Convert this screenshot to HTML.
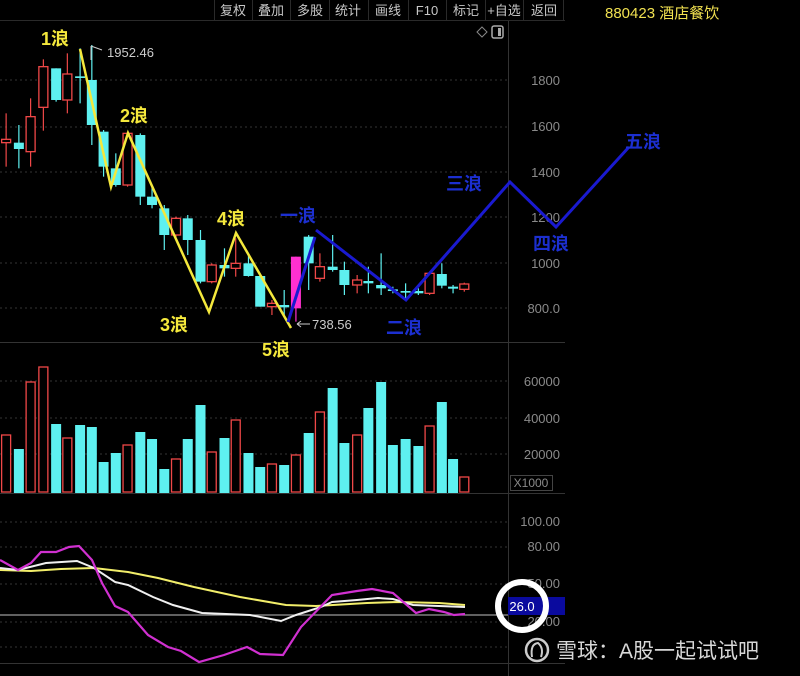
<!DOCTYPE html>
<html><head><meta charset="utf-8">
<style>
html,body{margin:0;padding:0;background:#000;width:800px;height:676px;overflow:hidden}
svg{display:block}
text{font-family:"Liberation Sans","Noto Sans CJK SC",sans-serif}
</style></head>
<body>
<svg id="s" width="800" height="676" viewBox="0 0 800 676" xmlns="http://www.w3.org/2000/svg">
<rect width="800" height="676" fill="#000"/>
<!-- toolbar -->
<g stroke="#2a2a2a" stroke-width="1">
<line x1="0" y1="20.5" x2="565" y2="20.5"/>
<line x1="214.5" y1="0" x2="214.5" y2="20"/><line x1="252.5" y1="0" x2="252.5" y2="20"/>
<line x1="290.5" y1="0" x2="290.5" y2="20"/><line x1="329.5" y1="0" x2="329.5" y2="20"/>
<line x1="368.5" y1="0" x2="368.5" y2="20"/><line x1="408.5" y1="0" x2="408.5" y2="20"/>
<line x1="446.5" y1="0" x2="446.5" y2="20"/><line x1="485.5" y1="0" x2="485.5" y2="20"/>
<line x1="523.5" y1="0" x2="523.5" y2="20"/><line x1="563.5" y1="0" x2="563.5" y2="20"/>
</g>
<g fill="#c8c8c8" font-size="13" text-anchor="middle">
<text x="233" y="15">复权</text><text x="271" y="15">叠加</text><text x="310" y="15">多股</text>
<text x="348" y="15">统计</text><text x="388" y="15">画线</text><text x="427" y="15">F10</text>
<text x="466" y="15">标记</text><text x="504" y="15">+自选</text><text x="544" y="15">返回</text>
</g>
<text x="605" y="18" fill="#f0e050" font-size="15">880423 酒店餐饮</text>
<path d="M482 27 L487 32 L482 37 L477 32Z" fill="none" stroke="#888" stroke-width="1"/>
<rect x="492" y="26" width="11" height="12" rx="2" fill="none" stroke="#aaa" stroke-width="1.5"/>
<rect x="498" y="28" width="3" height="8" fill="#aaa"/>
<!-- axis -->
<line x1="508.5" y1="21" x2="508.5" y2="676" stroke="#333"/>
<g stroke="#333" stroke-dasharray="2,3">
<line x1="0" y1="80" x2="508" y2="80"/><line x1="0" y1="127" x2="508" y2="127"/>
<line x1="0" y1="172" x2="508" y2="172"/><line x1="0" y1="217" x2="508" y2="217"/>
<line x1="0" y1="263" x2="508" y2="263"/><line x1="0" y1="308" x2="508" y2="308"/>
<line x1="0" y1="381" x2="508" y2="381"/><line x1="0" y1="418" x2="508" y2="418"/>
<line x1="0" y1="454" x2="508" y2="454"/>
<line x1="0" y1="522" x2="508" y2="522"/><line x1="0" y1="547" x2="508" y2="547"/>
<line x1="0" y1="584" x2="508" y2="584"/><line x1="0" y1="622" x2="508" y2="622"/>
<line x1="0" y1="647" x2="508" y2="647"/>
</g>
<g stroke="#333"><line x1="0" y1="342.5" x2="565" y2="342.5"/><line x1="0" y1="493.5" x2="565" y2="493.5"/><line x1="0" y1="663.5" x2="565" y2="663.5"/></g>
<g fill="#8a8a8a" font-size="13" text-anchor="end">
<text x="560" y="85">1800</text><text x="560" y="131">1600</text><text x="560" y="177">1400</text>
<text x="560" y="222">1200</text><text x="560" y="268">1000</text><text x="560" y="313">800.0</text>
<text x="560" y="386">60000</text><text x="560" y="423">40000</text><text x="560" y="459">20000</text>
<text x="560" y="526">100.00</text><text x="560" y="551">80.00</text><text x="560" y="588">50.00</text>
<text x="560" y="626">20.00</text>
</g>
<rect x="510.5" y="475.5" width="42" height="15" fill="none" stroke="#444"/>
<text x="531" y="487" fill="#8a8a8a" font-size="12" text-anchor="middle">X1000</text>
<g id="c"></g>
<g id="v"></g>
<line x1="0" y1="615" x2="508" y2="615" stroke="#999" stroke-width="1.2"/>
<polyline fill="none" stroke="#f2ee6a" stroke-width="2" points="0,570 31,571 61,569 94,568 128,572 158,578 194,587 240,597 286,605 316,606 367,603 398,602 439,603 465,605"/>
<polyline fill="none" stroke="#f0f0f0" stroke-width="2" points="0,568 18,570 46,563 77,561 94,568 115,582 128,585 153,597 173,605 202,613 250,615 281,621 296,615 321,607 332,602 357,600 378,598 393,599 413,605 465,607"/>
<polyline fill="none" stroke="#d030d0" stroke-width="2.2" points="0,560 18,570 31,563 41,552 56,552 69,547 79,546 92,560 102,583 115,606 128,612 148,635 168,647 181,651 199,662 224,655 247,647 260,654 283,655 301,627 332,595 357,591 372,589 393,593 416,613 429,609 444,612 454,615 465,614"/>
<!-- waves -->
<polyline fill="none" stroke="#f4e83c" stroke-width="2.5" points="80,49 111,187 128,133 209,312 236,233 291,328"/>
<line x1="288" y1="322" x2="315" y2="237" stroke="#1a1ad0" stroke-width="3"/>
<polyline fill="none" stroke="#1a1ad0" stroke-width="3" points="316,230 406,300 510,182 556,227 629,147"/>
<g font-size="18" font-weight="bold" fill="#f4e83c">
<text x="41" y="45">1浪</text><text x="120" y="122">2浪</text><text x="160" y="331">3浪</text>
<text x="217" y="225">4浪</text><text x="262" y="356">5浪</text></g>
<g font-size="18" font-weight="bold" fill="#1c2fd0">
<text x="280" y="222">一浪</text><text x="386" y="334">二浪</text><text x="446" y="190">三浪</text>
<text x="533" y="250">四浪</text><text x="625" y="148">五浪</text></g>
<g fill="#ccc" font-size="13"><text x="107" y="57">1952.46</text><text x="312" y="329">738.56</text></g>
<path d="M91 46 L91 60 M91 46 L102 50" stroke="#ccc" fill="none"/>
<path d="M297 324 L310 324 M297 324 L301 321 M297 324 L301 327" stroke="#ccc" fill="none"/>
<!-- 26.0 -->
<rect x="508" y="597" width="57" height="18" fill="#0a0a9e"/>
<circle cx="522" cy="606" r="24" fill="none" stroke="#fff" stroke-width="6"/>
<text x="522" y="611" fill="#fff" font-size="13" text-anchor="middle">26.0</text>
<!-- watermark -->
<circle cx="537" cy="650" r="11" fill="none" stroke="#ccc" stroke-width="2.5"/>
<path d="M532 657 Q530 644 538 643 Q544 648 541 657" fill="none" stroke="#ccc" stroke-width="2"/>
<text x="556" y="658" fill="#d8d8d8" font-size="21">雪球：A股一起试试吧</text>
</svg>
<script>
var ns="http://www.w3.org/2000/svg";
function el(p,t,a){var e=document.createElementNS(ns,t);for(var k in a)e.setAttribute(k,a[k]);p.appendChild(e);return e;}
var C=document.getElementById('c'),V=document.getElementById('v');
var R="#f04848",B="#5ef0f0",M="#ff30d0";
// zx, bodyTop, bodyBot, wickTop, wickBot, color (zoom coords)
var cd=[[12,418,428,340,500,R],[37,428,447,375,505,B],[60,350,455,295,500,R],[85,200,322,178,392,R],[110,205,300,205,305,B],[132,222,300,160,340,R],[157,229,234,145,310,B],[180,240,375,135,435,B],[203,395,500,390,530,B],[227,505,555,460,560,B],[250,400,555,395,560,R],[275,405,590,400,615,B],[298,590,615,560,625,B],[322,625,705,615,750,B],[345,655,705,650,710,R],[368,655,720,645,765,B],[393,720,845,690,850,B],[415,795,845,790,850,R],[440,795,805,745,830,B],[462,790,805,715,830,R],[487,790,828,765,830,B],[510,828,920,828,920,B],[533,910,920,900,945,R],[557,915,922,870,945,B],[580,770,925,770,965,M],[605,710,790,705,870,B],[627,800,835,760,845,R],[652,800,810,705,815,B],[675,810,855,785,885,B],[700,840,855,825,880,R],[722,843,850,800,880,B],[747,855,865,760,885,B],[770,868,873,860,880,B],[795,873,878,850,900,B],[820,873,880,865,885,B],[842,820,880,815,885,R],[866,822,857,790,865,B],[888,860,866,855,880,B],[910,852,868,848,875,R]];
cd.forEach(function(c){var x=c[0]/1.96,bt=c[1]/3,bb=c[2]/3,wt=c[3]/3,wb=c[4]/3,col=c[5];
el(C,'line',{x1:x,y1:wt,x2:x,y2:wb,stroke:col,'stroke-width':1.2});
var h=Math.max(1.5,bb-bt);
if(col==R)el(C,'rect',{x:x-4.5,y:bt,width:9,height:h,fill:'#000',stroke:col,'stroke-width':1.3});
else el(C,'rect',{x:x-5,y:bt,width:10,height:h,fill:col});});
var vt=[[R,435],[B,449],[R,382],[R,367],[B,424],[R,438],[B,425],[B,427],[B,462],[B,453],[R,445],[B,432],[B,439],[B,469],[R,459],[B,439],[B,405],[R,452],[B,438],[R,420],[B,453],[B,467],[R,464],[B,465],[R,455],[B,433],[R,412],[B,388],[B,443],[R,435],[B,408],[B,382],[B,445],[B,439],[B,446],[R,426],[B,402],[B,459],[R,477]];
vt.forEach(function(v,i){var x=cd[i][0]/1.96,t=v[1],col=v[0];
if(col==R)el(V,'rect',{x:x-4.5,y:t,width:9,height:492-t,fill:'#000',stroke:col,'stroke-width':1.3});
else el(V,'rect',{x:x-5,y:t,width:10,height:493-t,fill:col});});
</script>
</body></html>
